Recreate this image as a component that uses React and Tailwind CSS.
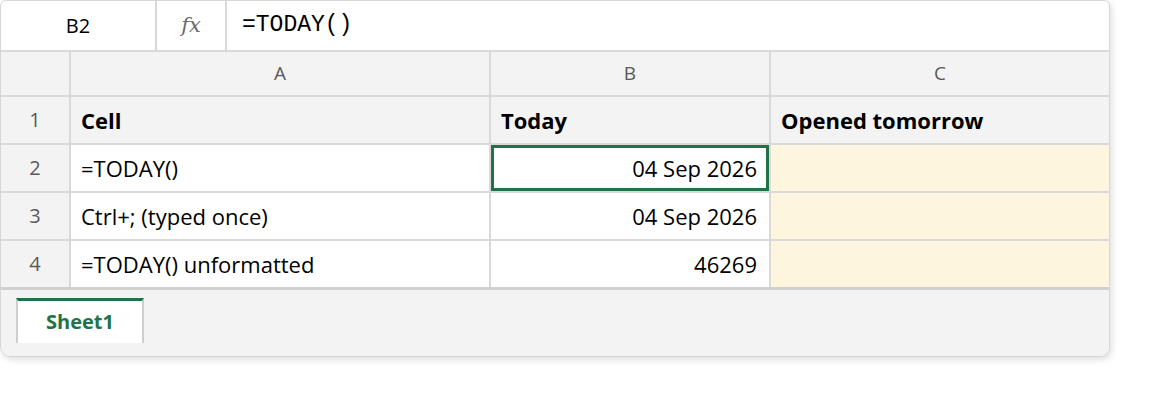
import React from 'react'

const FONT = { fontFamily: '"Open Sans", "Noto Sans", sans-serif' }

const COLUMNS = ['A', 'B', 'C']

const ROWS = [
  { n: 1, a: 'Cell', b: 'Today', c: 'Opened tomorrow', head: true },
  { n: 2, a: '=TODAY()', b: '04 Sep 2026', c: '', selected: true },
  { n: 3, a: 'Ctrl+; (typed once)', b: '04 Sep 2026', c: '' },
  { n: 4, a: '=TODAY() unformatted', b: '46269', c: '' },
]

function RowCells({ row }) {
  const base = row.head ? 'bg-[#f3f3f3]' : 'bg-white'
  const cBg = row.head ? 'bg-[#f3f3f3]' : 'bg-[#fdf5de]'
  return (
    <>
      <div className="flex items-center justify-center bg-[#f3f3f3] text-[20px] text-[#595959]">{row.n}</div>
      <div className={`flex items-center pl-[10px] text-[22px] text-black ${base} ${row.head ? 'font-bold text-[21.5px]' : ''}`}>{row.a}</div>
      {row.selected ? (
        <div className="flex items-center justify-end border-[3px] border-[#217346] bg-white pr-[9px] text-[22px] text-black">{row.b}</div>
      ) : (
        <div className={`flex items-center pl-[10px] pr-[12px] text-[22px] text-black ${base} ${row.head ? 'font-bold text-[21.5px]' : 'justify-end'}`}>{row.b}</div>
      )}
      <div className={`flex items-center pl-[10px] text-[22px] text-black ${cBg} ${row.head ? 'font-bold text-[21.5px]' : ''}`}>{row.c}</div>
    </>
  )
}

export default function App() {
  return (
    <div className="h-[404px] w-[1158px] bg-white" style={FONT}>
      <div className="w-[1110px] overflow-hidden rounded-b-[10px] rounded-t-[6px] border border-[#d6d6d6] bg-white shadow-[2px_3px_6px_rgba(0,0,0,0.12)]">
        {/* formula bar */}
        <div className="flex h-[51px] border-b-2 border-[#d9d9d9]">
          <div className="flex w-[156px] items-center justify-center border-r-2 border-[#d9d9d9] text-[20px] text-black">B2</div>
          <div className="flex w-[70px] items-center justify-center border-r-2 border-[#d9d9d9] text-[21px] italic text-[#6b6b6b]" style={{ fontFamily: '"DejaVu Serif", serif' }}>
            fx
          </div>
          <div className="flex items-center pl-[15px] text-[23px] text-black" style={{ fontFamily: '"Liberation Mono", monospace' }}>
            =TODAY()
          </div>
        </div>

        {/* grid */}
        <div className="grid grid-cols-[68px_418px_278px_338px] grid-rows-[43px_46px_46px_46px_46px] gap-[2px] bg-[#d9d9d9]">
          <div className="bg-[#f3f3f3]" />
          {COLUMNS.map((col) => (
            <div key={col} className="flex items-center justify-center bg-[#f3f3f3] text-[19px] text-[#595959]">{col}</div>
          ))}
          {ROWS.map((row) => (
            <RowCells key={row.n} row={row} />
          ))}
        </div>

        {/* sheet tabs */}
        <div className="h-[69px] border-t-[3px] border-[#d0d0d0] bg-[#f3f3f3] pl-[15px] pt-[8px]">
          <div className="flex h-[45px] w-[128px] items-center justify-center border-x-2 border-t-[3px] border-x-[#cfcfcf] border-t-[#217346] bg-white text-[20px] font-bold text-[#217346]">
            Sheet1
          </div>
        </div>
      </div>
    </div>
  )
}
